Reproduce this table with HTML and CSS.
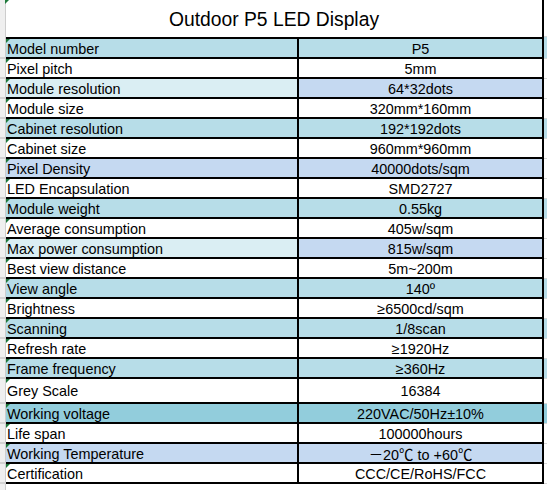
FILE: index.html
```html
<!DOCTYPE html>
<html>
<head>
<meta charset="utf-8">
<link rel="stylesheet" href="styles.css">
</head>
<body>
<div class="sheet">
  <div class="row title-row">
    <div class="gut gut-title"><span class="flag"></span></div>
    <div class="title">Outdoor P5 LED Display</div>
    <div class="tail"></div>
  </div>
  <div class="row first">
    <div class="gut"></div><div class="k aqua">Model number</div><div class="v aqua">P5</div><div class="tail aqua"></div>
  </div>
  <div class="row">
    <div class="gut"></div><div class="k">Pixel pitch</div><div class="v">5mm</div><div class="tail"></div>
  </div>
  <div class="row">
    <div class="gut"></div><div class="k pale">Module resolution</div><div class="v lav">64*32dots</div><div class="tail"></div>
  </div>
  <div class="row">
    <div class="gut"></div><div class="k">Module size</div><div class="v">320mm*160mm</div><div class="tail"></div>
  </div>
  <div class="row">
    <div class="gut"></div><div class="k aqua">Cabinet resolution</div><div class="v aqua">192*192dots</div><div class="tail aqua"></div>
  </div>
  <div class="row">
    <div class="gut"></div><div class="k">Cabinet size</div><div class="v">960mm*960mm</div><div class="tail"></div>
  </div>
  <div class="row">
    <div class="gut"></div><div class="k lav">Pixel Density</div><div class="v lav">40000dots/sqm</div><div class="tail"></div>
  </div>
  <div class="row">
    <div class="gut"></div><div class="k">LED Encapsulation</div><div class="v">SMD2727</div><div class="tail"></div>
  </div>
  <div class="row">
    <div class="gut"></div><div class="k aqua">Module weight</div><div class="v aqua">0.55kg</div><div class="tail aqua"></div>
  </div>
  <div class="row">
    <div class="gut"></div><div class="k">Average consumption</div><div class="v">405w/sqm</div><div class="tail"></div>
  </div>
  <div class="row">
    <div class="gut"></div><div class="k pale">Max power consumption</div><div class="v lav">815w/sqm</div><div class="tail"></div>
  </div>
  <div class="row">
    <div class="gut"></div><div class="k">Best view distance</div><div class="v">5m~200m</div><div class="tail"></div>
  </div>
  <div class="row">
    <div class="gut"></div><div class="k aqua">View angle</div><div class="v aqua">140º</div><div class="tail aqua"></div>
  </div>
  <div class="row">
    <div class="gut"></div><div class="k">Brightness</div><div class="v">≥6500cd/sqm</div><div class="tail"></div>
  </div>
  <div class="row">
    <div class="gut"></div><div class="k aqua">Scanning</div><div class="v aqua">1/8scan</div><div class="tail aqua"></div>
  </div>
  <div class="row">
    <div class="gut"></div><div class="k">Refresh rate</div><div class="v">≥1920Hz</div><div class="tail"></div>
  </div>
  <div class="row">
    <div class="gut"></div><div class="k aqua">Frame frequency</div><div class="v aqua">≥360Hz</div><div class="tail aqua"></div>
  </div>
  <div class="row tall">
    <div class="gut"></div><div class="k">Grey Scale</div><div class="v">16384</div><div class="tail"></div>
  </div>
  <div class="row">
    <div class="gut"></div><div class="k teal">Working voltage</div><div class="v teal">220VAC/50Hz±10%</div><div class="tail teal"></div>
  </div>
  <div class="row">
    <div class="gut"></div><div class="k">Life span</div><div class="v">100000hours</div><div class="tail"></div>
  </div>
  <div class="row">
    <div class="gut"></div><div class="k lav">Working Temperature</div><div class="v lav"><span class="cjk">－</span>20<span class="cjk">℃</span> to +60<span class="cjk">℃</span></div><div class="tail"></div>
  </div>
  <div class="row">
    <div class="gut"></div><div class="k">Certification</div><div class="v">CCC/CE/RoHS/FCC</div><div class="tail"></div>
  </div>
  <div class="row rest">
    <div class="gut"></div><div class="blank"></div><div class="blank"></div><div class="tail"></div>
  </div>
</div>
</body>
</html>
```
FILE: styles.css
```css
html, body {
  margin: 0;
  padding: 0;
  background: #ffffff;
}
body {
  width: 547px;
  height: 490px;
  overflow: hidden;
  font-family: "Liberation Sans", Arial, sans-serif;
  color: #000;
}
.sheet {
  display: flex;
  flex-direction: column;
}
.row {
  display: grid;
  grid-template-columns: 6px 293px 245px 3px;
}
.gut {
  background: #efefef;
  border-right: 1px solid #cdcdcd;
  border-bottom: 2px solid #d2d2d2;
  position: relative;
}
.gut-title {
  border-bottom: none;
}
.title {
  grid-column: span 2;
  height: 37px;
  box-sizing: border-box;
  padding-top: 2px;
  line-height: 35px;
  font-size: 19.3px;
  text-align: center;
  border-right: 2px solid #000;
  white-space: nowrap;
}
.flag {
  position: absolute;
  left: 5px;
  top: 0;
  width: 0;
  height: 0;
  border-top: 4px solid #1f7a3c;
  border-right: 4px solid transparent;
}
.k, .v {
  height: 18px;
  line-height: 20px;
  font-size: 14.4px;
  border-bottom: 2px solid #000;
  border-right: 2px solid #000;
  white-space: nowrap;
  overflow: hidden;
  position: relative;
}
.k {
  padding-left: 1px;
}
.k::before {
  content: "";
  position: absolute;
  left: 0;
  top: 0;
  width: 0;
  height: 0;
  border-top: 4px solid #1f7a3c;
  border-right: 4px solid transparent;
}
.v {
  text-align: center;
}
.first .k, .first .v {
  border-top: 2px solid #000;
}
.tall .k, .tall .v {
  height: 23px;
  line-height: 25px;
}
.tail {
  border-bottom: 1px solid #d6d6d6;
}
.rest .blank {
  height: 6px;
}
.rest .gut, .rest .tail {
  border-bottom: none;
}
.aqua { background: #b7dde8; }
.pale { background: #daeef3; }
.lav { background: #c5d9f1; }
.teal { background: #92cddc; }
.cjk {
  font-family: "Noto Sans CJK SC", sans-serif;
}
```
